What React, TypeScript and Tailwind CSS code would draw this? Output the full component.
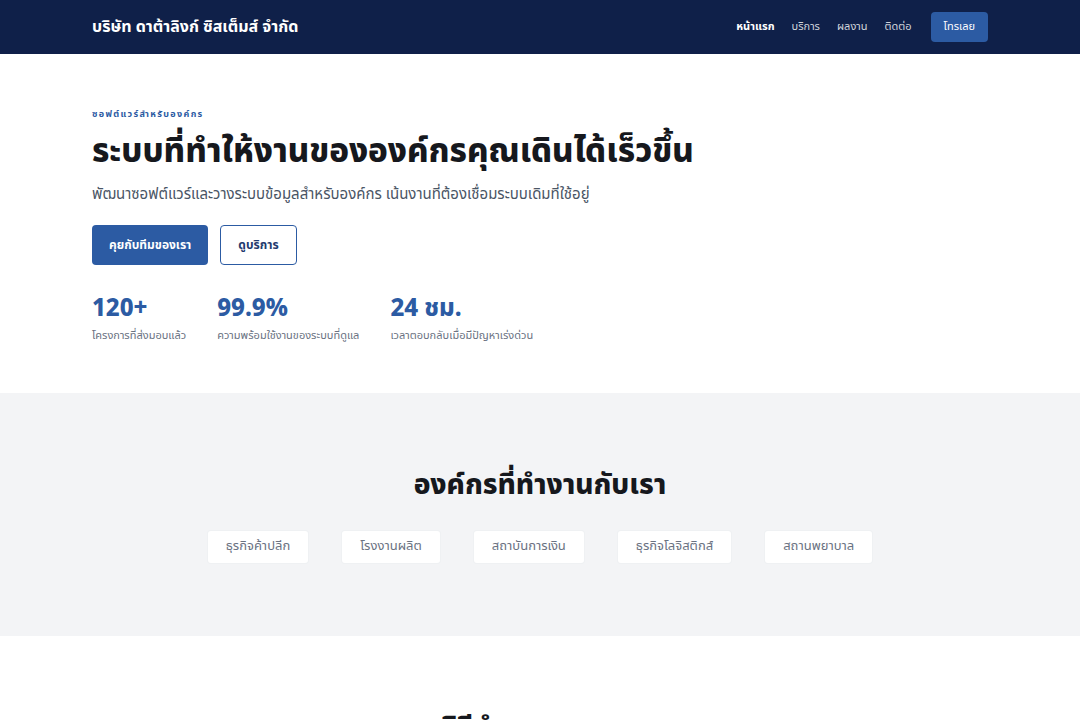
const navLinks = ["หน้าแรก", "บริการ", "ผลงาน", "ติดต่อ"]

const stats = [
  { value: "120+", label: "โครงการที่ส่งมอบแล้ว" },
  { value: "99.9%", label: "ความพร้อมใช้งานของระบบที่ดูแล" },
  { value: "24 ชม.", label: "เวลาตอบกลับเมื่อมีปัญหาเร่งด่วน" },
]

const clients = ["ธุรกิจค้าปลีก", "โรงงานผลิต", "สถาบันการเงิน", "ธุรกิจโลจิสติกส์", "สถานพยาบาล"]

export default function App() {
  return (
    <div className="min-h-screen bg-white text-gray-900 font-['Noto_Sans_Thai','Noto_Sans',sans-serif]">
      {/* Top navigation */}
      <header className="bg-[#0f2049]">
        <div className="mx-auto flex h-[54px] max-w-5xl items-center justify-between px-16">
          <span className="text-[16px] font-bold text-white">บริษัท ดาต้าลิงก์ ซิสเต็มส์ จำกัด</span>
          <nav className="flex items-center gap-[17px] text-[11px]">
            {navLinks.map((link, i) => (
              <a
                key={link}
                href="#"
                className={i === 0 ? "font-bold text-white" : "text-gray-300"}
              >
                {link}
              </a>
            ))}
            <a
              href="#"
              className="ml-[2px] flex h-[30px] items-center rounded bg-[#2c5ba3] px-[13px] text-white"
            >
              โทรเลย
            </a>
          </nav>
        </div>
      </header>

      {/* Hero */}
      <section className="pb-[48px] pt-[54px]">
        <div className="mx-auto max-w-5xl px-16">
          <p className="text-[9px] font-bold tracking-[0.15em] text-[#2c5ba3]">ซอฟต์แวร์สำหรับองค์กร</p>
          <h1 className="mt-[6px] text-[33px] font-extrabold leading-[48px] text-[#16181d]">
            ระบบที่ทำให้งานขององค์กรคุณเดินได้เร็วขึ้น
          </h1>
          <p className="mt-[8px] text-[15px] text-gray-600">
            พัฒนาซอฟต์แวร์และวางระบบข้อมูลสำหรับองค์กร เน้นงานที่ต้องเชื่อมระบบเดิมที่ใช้อยู่
          </p>
          <div className="mt-[19px] flex gap-3">
            <a
              href="#"
              className="flex h-10 items-center rounded bg-[#2c5ba3] px-[17px] text-[12px] font-bold text-white"
            >
              คุยกับทีมของเรา
            </a>
            <a
              href="#"
              className="flex h-10 items-center rounded border border-[#2c5ba3] px-[17px] text-[12px] font-bold text-[#1e3a6e]"
            >
              ดูบริการ
            </a>
          </div>
          <div className="mt-[28px] flex gap-[31px]">
            {stats.map((s) => (
              <div key={s.value}>
                <div className="text-[24px] font-extrabold leading-[32px] text-[#2c5ba3]">{s.value}</div>
                <div className="mt-[3px] text-[11px] text-gray-500">{s.label}</div>
              </div>
            ))}
          </div>
        </div>
      </section>

      {/* Clients */}
      <section className="bg-[#f3f4f6] pb-[72px] pt-[72px]">
        <div className="mx-auto max-w-5xl px-16 text-center">
          <h2 className="text-[28px] font-extrabold text-[#16181d]">องค์กรที่ทำงานกับเรา</h2>
          <div className="mt-[23px] flex justify-center gap-8">
            {clients.map((c) => (
              <div
                key={c}
                className="flex h-[34px] items-center rounded border border-gray-200/60 bg-white px-[18px] text-[13px] text-gray-500"
              >
                {c}
              </div>
            ))}
          </div>
        </div>
      </section>

      {/* How we work */}
      <section className="pt-[72px]">
        <h2 className="text-center text-[28px] font-extrabold text-[#16181d]">วิธีทำงานของเรา</h2>
      </section>
    </div>
  )
}
